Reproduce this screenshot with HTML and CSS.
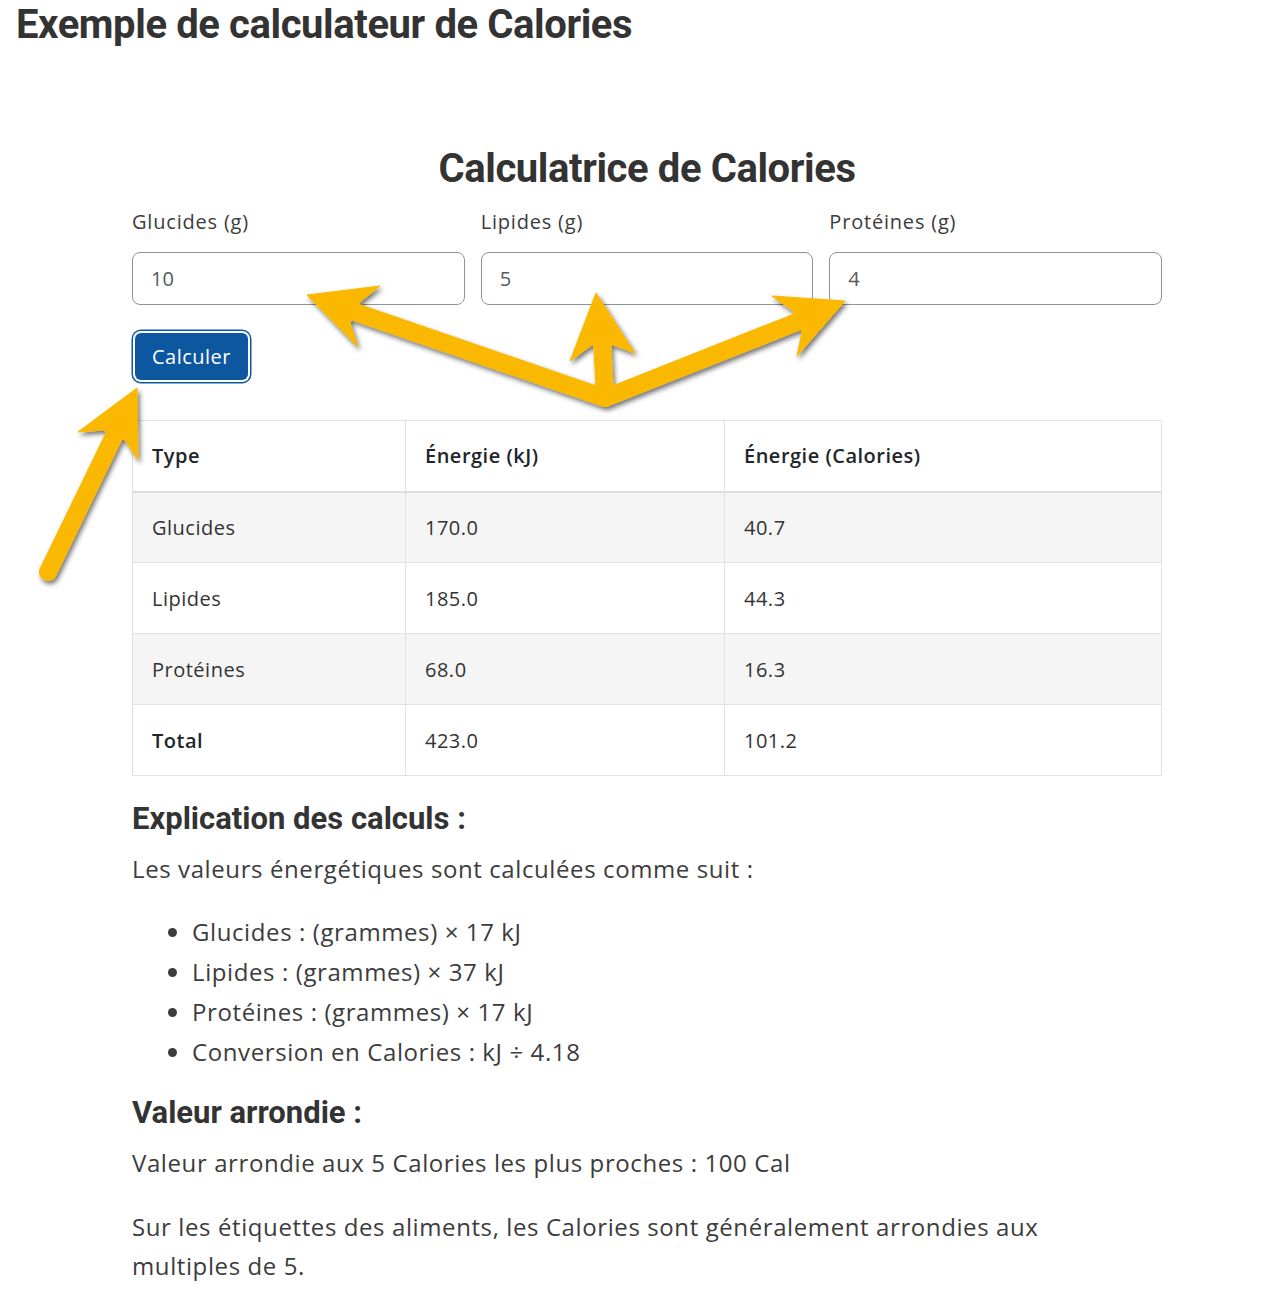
FILE: index.html
```html
<!DOCTYPE html>
<html lang="fr">
<head>
<meta charset="utf-8">
<title>Exemple de calculateur de Calories</title>
<link rel="stylesheet" href="styles.css">
</head>
<body>
<h1 class="page-title">Exemple de calculateur de Calories</h1>
<div class="calc">
  <h2 class="calc-title">Calculatrice de Calories</h2>
  <div class="fields">
    <div class="field">
      <label class="field-label">Glucides (g)</label>
      <input class="field-input" type="text" value="10">
    </div>
    <div class="field">
      <label class="field-label">Lipides (g)</label>
      <input class="field-input" type="text" value="5">
    </div>
    <div class="field">
      <label class="field-label">Protéines (g)</label>
      <input class="field-input" type="text" value="4">
    </div>
  </div>
  <button class="btn" type="button">Calculer</button>
  <table class="results">
    <thead>
      <tr><th class="col-type">Type</th><th class="col-kj">Énergie (kJ)</th><th>Énergie (Calories)</th></tr>
    </thead>
    <tbody>
      <tr class="striped"><td>Glucides</td><td>170.0</td><td>40.7</td></tr>
      <tr><td>Lipides</td><td>185.0</td><td>44.3</td></tr>
      <tr class="striped"><td>Protéines</td><td>68.0</td><td>16.3</td></tr>
      <tr><td class="strong">Total</td><td>423.0</td><td>101.2</td></tr>
    </tbody>
  </table>
  <h3 class="section-title">Explication des calculs :</h3>
  <p class="text">Les valeurs énergétiques sont calculées comme suit :</p>
  <ul class="list">
    <li>Glucides : (grammes) × 17 kJ</li>
    <li>Lipides : (grammes) × 37 kJ</li>
    <li>Protéines : (grammes) × 17 kJ</li>
    <li>Conversion en Calories : kJ ÷ 4.18</li>
  </ul>
  <h3 class="section-title section-title-2">Valeur arrondie :</h3>
  <p class="text">Valeur arrondie aux 5 Calories les plus proches : 100 Cal</p>
  <p class="text note">Sur les étiquettes des aliments, les Calories sont généralement arrondies aux multiples de 5.</p>
</div>
<svg class="arrows" width="1286" height="1300" viewBox="0 0 1286 1300" xmlns="http://www.w3.org/2000/svg">
  <defs>
    <filter id="sh" x="-20%" y="-20%" width="140%" height="140%">
      <feDropShadow dx="2" dy="3" stdDeviation="2.5" flood-color="#000" flood-opacity="0.55"/>
    </filter>
  </defs>
  <g filter="url(#sh)" fill="#fab800" stroke="#fab800" stroke-linejoin="round">
    <line x1="355" y1="312" x2="605" y2="398" stroke-width="18" stroke-linecap="round"/>
    <polygon stroke-width="1" points="307,295 380,286 360,302 350,323 358,347"/>
    <line x1="602" y1="340" x2="605" y2="396" stroke-width="18" stroke-linecap="round"/>
    <polygon stroke-width="1" points="596,293 635,353 613,345 592,345 570,361"/>
    <line x1="797" y1="322" x2="605" y2="398" stroke-width="18" stroke-linecap="round"/>
    <polygon stroke-width="1" points="845,301 797,356 802,332 793,311 772,296"/>
    <line x1="114" y1="436" x2="48" y2="572" stroke-width="18" stroke-linecap="round"/>
    <polygon stroke-width="1" points="137,388 138,460 125,440 103,430 78,432"/>
  </g>
</svg>
</body>
</html>
```
FILE: styles.css
```css
html, body {
  margin: 0;
  padding: 0;
  background: #ffffff;
}
body {
  position: relative;
  width: 1286px;
  min-height: 1300px;
  font-family: "Open Sans", "Noto Sans", sans-serif;
  color: #3c3c3c;
  padding: 0 16px;
  box-sizing: border-box;
}
.page-title {
  margin: 0;
  font-family: "Roboto", sans-serif;
  font-weight: 700;
  font-size: 40px;
  line-height: 50px;
  letter-spacing: -0.4px;
  color: #333333;
}
.calc {
  width: 1030px;
  margin: 95px 0 0 116px;
}
.calc-title {
  margin: 0;
  text-align: center;
  font-family: "Roboto", sans-serif;
  font-weight: 700;
  font-size: 40px;
  line-height: 48px;
  letter-spacing: -0.4px;
  color: #333333;
}
.fields {
  display: flex;
  gap: 16px;
  margin-top: 14px;
}
.field {
  flex: 1;
  display: flex;
  flex-direction: column;
}
.field-label {
  font-size: 20px;
  line-height: 30px;
  letter-spacing: 0.8px;
  color: #3c3c3c;
  margin-bottom: 15px;
}
.field-input {
  height: 53px;
  box-sizing: border-box;
  border: 1px solid #8e939b;
  border-radius: 8px;
  padding: 0 18px;
  font-family: inherit;
  font-size: 20px;
  color: #555a60;
  background: #fff;
  outline: none;
}
.btn {
  display: block;
  margin: 28px 0 0 3px;
  width: 113px;
  height: 47px;
  border: none;
  border-radius: 6px;
  background: #0d57a1;
  color: #ffffff;
  font-family: inherit;
  font-size: 20px;
  letter-spacing: 0.5px;
  box-shadow: 0 0 0 2px #ffffff, 0 0 0 3.5px #0d57a1;
  padding: 0;
}
.results {
  width: 100%;
  margin-top: 40px;
  border-collapse: collapse;
  font-size: 20px;
  letter-spacing: 0.5px;
  color: #2a2a2a;
}
.results th,
.results td {
  height: 71px;
  padding: 0 19px;
  text-align: left;
  border: 1px solid #dfe2e6;
  box-sizing: border-box;
}
.results th {
  font-weight: 600;
  color: #212529;
  border-bottom: 2px solid #dadde2;
}
.col-type { width: 273px; }
.col-kj { width: 319px; }
.results td { color: #333; }
.results .strong { font-weight: 600; color: #212529; }
.striped td { background: #f5f5f5; }
.section-title {
  margin: 25px 0 14px;
  font-family: "Roboto", sans-serif;
  font-weight: 700;
  font-size: 31px;
  line-height: 36px;
  letter-spacing: 0;
  color: #333333;
}
.section-title-2 {
  margin-top: 23px;
  margin-bottom: 14px;
}
.text {
  margin: 0;
  font-size: 24px;
  line-height: 36px;
  letter-spacing: 0.6px;
}
.note {
  margin-top: 26px;
  max-width: 960px;
  line-height: 39px;
}
.list {
  margin: 25px 0 0;
  padding-left: 60px;
  font-size: 24px;
  line-height: 40px;
  letter-spacing: 0.6px;
}
.arrows {
  position: absolute;
  left: 0;
  top: 0;
  pointer-events: none;
}
```
